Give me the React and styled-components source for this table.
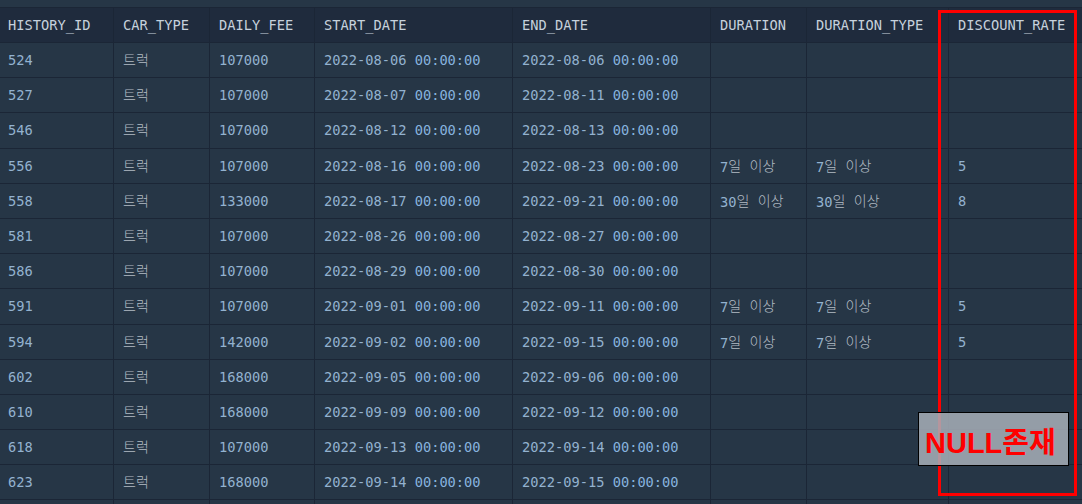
import React from "react";
import styled, { createGlobalStyle } from "styled-components";

const Global = createGlobalStyle`
  html, body { margin: 0; padding: 0; background: #263646; overflow: hidden; }
  #root { width: 1082px; height: 504px; }
`;

const Page = styled.div`
  position: relative;
  width: 1082px;
  height: 504px;
  overflow: hidden;
  background: #263646;
  padding-top: 7px;
  box-sizing: border-box;
  font-family: "DejaVu Sans Mono", "Noto Sans CJK KR", monospace;
  font-size: 13.7px;
`;

const cols = "113px 96px 105px 198px 198px 96px 142px 200px";

const Row = styled.div`
  display: grid;
  grid-template-columns: ${cols};
  height: ${(p) => (p.$head ? "35px" : "35.2px")};
  box-sizing: border-box;
  border-top: 1px solid #1b2636;
  background: ${(p) => (p.$head ? "#1f2b3d" : "#263646")};
  color: ${(p) => (p.$head ? "#c6d1dc" : "#93b2cf")};
`;

const Cell = styled.div`
  display: flex;
  align-items: center;
  padding-left: ${(p) => (p.$first ? "8px" : "9px")};
  border-left: ${(p) => (p.$first ? "none" : "1px solid #1b2636")};
  white-space: pre;
  overflow: hidden;
`;

const Text = styled.span`
  white-space: pre;
`;

const Ko = styled.span`
  color: #b2bbc4;
  font-family: "DejaVu Sans Mono", "Noto Sans CJK KR", monospace;
  font-weight: 300;
  font-size: 14px;
  position: relative;
  top: -1px;
`;

const Time = styled.span`
  color: #86b3df;
`;

const Highlight = styled.div`
  position: absolute;
  left: 938px;
  top: 10px;
  width: 139px;
  height: 486px;
  box-sizing: border-box;
  border: 3px solid #ff0000;
  pointer-events: none;
`;

const Label = styled.div`
  position: absolute;
  left: 918px;
  top: 412px;
  width: 151px;
  height: 54px;
  box-sizing: border-box;
  border: 1px solid #000;
  background: rgba(168, 175, 184, 0.85);
  color: #ff0000;
  font-family: "Liberation Sans", "Noto Sans CJK KR", sans-serif;
  font-weight: 700;
  font-size: 29px;
  display: flex;
  align-items: center;
  padding-left: 6px;
  padding-top: 2px;
`;

const headers = ["HISTORY_ID", "CAR_TYPE", "DAILY_FEE", "START_DATE", "END_DATE", "DURATION", "DURATION_TYPE", "DISCOUNT_RATE"];

const data = [
  ["524", "107000", "2022-08-06", "2022-08-06", "", ""],
  ["527", "107000", "2022-08-07", "2022-08-11", "", ""],
  ["546", "107000", "2022-08-12", "2022-08-13", "", ""],
  ["556", "107000", "2022-08-16", "2022-08-23", "7", "5"],
  ["558", "133000", "2022-08-17", "2022-09-21", "30", "8"],
  ["581", "107000", "2022-08-26", "2022-08-27", "", ""],
  ["586", "107000", "2022-08-29", "2022-08-30", "", ""],
  ["591", "107000", "2022-09-01", "2022-09-11", "7", "5"],
  ["594", "142000", "2022-09-02", "2022-09-15", "7", "5"],
  ["602", "168000", "2022-09-05", "2022-09-06", "", ""],
  ["610", "168000", "2022-09-09", "2022-09-12", "", ""],
  ["618", "107000", "2022-09-13", "2022-09-14", "", ""],
  ["623", "168000", "2022-09-14", "2022-09-15", "", ""],
  ["", "", "", "", "", ""],
];

const DateCell = ({ d }) =>
  d ? (
    <Text>
      {d + " "}
      <Time>00:00:00</Time>
    </Text>
  ) : null;

const Dur = ({ n }) =>
  n ? (
    <Text>
      {n}
      <Ko>일 이상</Ko>
    </Text>
  ) : null;

export default function App() {
  return (
    <Page>
      <Global />
      <Row $head>
        {headers.map((h, i) => (
          <Cell key={h} $first={i === 0}>
            {h}
          </Cell>
        ))}
      </Row>
      {data.map((r, i) => (
        <Row key={i}>
          <Cell $first>{r[0]}</Cell>
          <Cell>{r[0] && <Ko>트럭</Ko>}</Cell>
          <Cell>{r[1]}</Cell>
          <Cell>
            <DateCell d={r[2]} />
          </Cell>
          <Cell>
            <DateCell d={r[3]} />
          </Cell>
          <Cell>
            <Dur n={r[4]} />
          </Cell>
          <Cell>
            <Dur n={r[4]} />
          </Cell>
          <Cell>{r[5]}</Cell>
        </Row>
      ))}
      <Highlight />
      <Label>NULL존재</Label>
    </Page>
  );
}
